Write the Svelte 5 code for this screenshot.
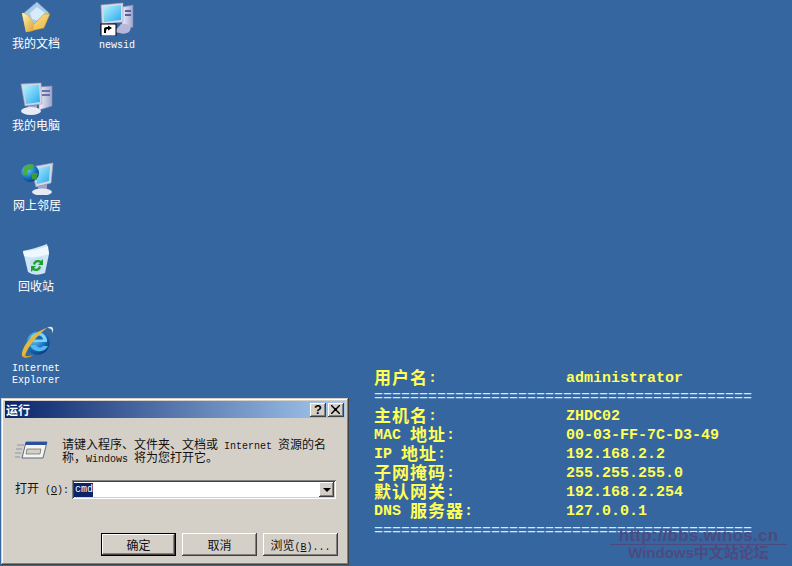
<script>
  const info = [
    { cjk: '主机名', suffix: ':', value: 'ZHDC02' },
    { latin: 'MAC ', cjk: '地址', suffix: ':', value: '00-03-FF-7C-D3-49' },
    { latin: 'IP ', cjk: '地址', suffix: ':', value: '192.168.2.2' },
    { cjk: '子网掩码', suffix: ':', value: '255.255.255.0' },
    { cjk: '默认网关', suffix: ':', value: '192.168.2.254' },
    { latin: 'DNS ', cjk: '服务器', suffix: ':', value: '127.0.0.1' }
  ];
  const rule = '='.repeat(42);
</script>

<div class="desktop">
  <div class="desk-icon docs">
    <svg width="32" height="32" viewBox="0 0 32 32">
      <defs>
        <linearGradient id="fold" x1="0" y1="0" x2="1" y2="1"><stop offset="0" stop-color="#fff6b8"/><stop offset="1" stop-color="#dca12c"/></linearGradient>
        <linearGradient id="foldr" x1="0" y1="0" x2="1" y2="1"><stop offset="0" stop-color="#ffe99a"/><stop offset="1" stop-color="#e8b540"/></linearGradient>
        <linearGradient id="screen" x1="0" y1="0" x2="1" y2="1"><stop offset="0" stop-color="#b8f4fa"/><stop offset="1" stop-color="#29a8f0"/></linearGradient>
        <linearGradient id="case" x1="0" y1="0" x2="1" y2="0"><stop offset="0" stop-color="#eef1fa"/><stop offset="1" stop-color="#9ea4cc"/></linearGradient>
        <radialGradient id="globe" cx=".35" cy=".3" r=".8"><stop offset="0" stop-color="#6fcfff"/><stop offset=".6" stop-color="#1570c0"/><stop offset="1" stop-color="#0a3270"/></radialGradient>
      </defs>
      <path d="M4 12 L17 1 L29 12 L24 24 L10 24 Z" fill="#a9cbe8" stroke="#7fa8cc" stroke-width=".6"/>
      <path d="M10 12 L17 6 L25 12 L20 20 L12 18 Z" fill="#d9ebf8"/>
      <path d="M2 12 C6 12 10 16 14 23 L24 13 L30 13 L24 27 L6 31 Z" fill="url(#foldr)" stroke="#b98a2a" stroke-width=".5"/>
      <path d="M2 12 C6 12 10 16 14 23 L13 30 L6 31 Z" fill="url(#fold)"/>
    </svg>
    <span class="label cjk">我的文档</span>
  </div>

  <div class="desk-icon news">
    <svg width="36" height="34" viewBox="0 0 36 34">
      <path d="M23 5 L34 3 L34 25 L23 28 Z" fill="url(#case)" stroke="#8088b0" stroke-width=".6"/>
      <path d="M26 8 h6 v2 h-6 Z M26 12 h6 v2 h-6 Z" fill="#5a5f9c"/>
      <path d="M22 22 a7 5 0 1 1 -1 9 l-6 -1 Z" fill="#b9b6dc"/>
      <path d="M2 3 L24 1 L24 20 L3 22 Z" fill="#d9dbe8" stroke="#9aa0c0" stroke-width=".6"/>
      <path d="M4 5 L22 3 L22 18 L5 20 Z" fill="url(#screen)"/>
      <rect x="2" y="22" width="15" height="12" fill="#fff" stroke="#000" stroke-width="1"/>
      <path d="M5 31 V27 Q5 25 8 25 H9 V23.5 L13 26 L9 28.5 V27 H8 Q7 27 7 31 Z" fill="#000"/>
    </svg>
    <span class="label latin">newsid</span>
  </div>

  <div class="desk-icon pc">
    <svg width="34" height="33" viewBox="0 0 34 33">
      <path d="M20 5 L33 4 L33 24 L20 28 Z" fill="url(#case)" stroke="#8a90b8" stroke-width=".6"/>
      <path d="M23 8 h8 v2 h-8 Z M23 12 h8 v2 h-8 Z" fill="#6a6fa8"/>
      <path d="M2 2 L22 1 L23 22 L6 24 Z" fill="#cfd6e6" stroke="#9aa4c4" stroke-width=".6"/>
      <path d="M4 4 L20 3 L21 20 L7 22 Z" fill="url(#screen)"/>
      <path d="M9 24 L18 23 L18 27 L9 27 Z" fill="#9da2c6"/>
      <ellipse cx="12" cy="29" rx="10" ry="4" fill="#e9ebf4"/>
    </svg>
    <span class="label cjk">我的电脑</span>
  </div>

  <div class="desk-icon net">
    <svg width="34" height="33" viewBox="0 0 34 33">
      <path d="M11 5 L33 1 L31 21 L16 25 Z" fill="#cfd6e6" stroke="#9aa4c4" stroke-width=".6"/>
      <path d="M14 7 L30 4 L29 19 L17 22 Z" fill="url(#screen)"/>
      <path d="M18 24 L27 22 L27 27 L18 28 Z" fill="#9da2c6"/>
      <ellipse cx="22" cy="30" rx="10" ry="3.5" fill="#e9ebf4"/>
      <circle cx="10" cy="11" r="9" fill="url(#globe)"/>
      <path d="M4 5 Q9 1 14 3 L12 8 L8 8 L7 13 L3 13 Z" fill="#4cae3c"/>
      <path d="M12 11 L18 11 L16 18 L12 17 Z" fill="#3d9c34"/>
    </svg>
    <span class="label cjk">网上邻居</span>
  </div>

  <div class="desk-icon bin">
    <svg width="32" height="33" viewBox="0 0 32 33">
      <path d="M3 8 Q14 6 27 1 L29 11 L25 30 Q15 34 8 29 Z" fill="#cfe6f6"/>
      <path d="M3 8 Q14 8 28 3 L29 11 Q14 16 4 13 Z" fill="#eef8ff"/>
      <path d="M10 17 L22 14 L23 28 L12 30 Z" fill="#bfe0ee"/>
      <path d="M13 21 A5 5 0 0 1 21 18 L23 16 L23 22 L18 22 L20 20 A3 3 0 0 0 15 22 Z" fill="#1fa02e"/>
      <path d="M21 24 A5 5 0 0 1 13 27 L11 29 L11 23 L16 23 L14 25 A3 3 0 0 0 19 23 Z" fill="#1fa02e"/>
    </svg>
    <span class="label cjk">回收站</span>
  </div>

  <div class="desk-icon ie">
    <svg width="34" height="34" viewBox="0 0 34 34">
      <circle cx="17" cy="18" r="11.5" fill="url(#globe)"/>
      <path d="M9 17 H26 A8.5 8.5 0 0 0 9 15 Z" fill="#7fd0f8"/>
      <path d="M13 14.5 H22 A4.5 4 0 0 0 13 14.5 Z" fill="#1468b4"/>
      <path d="M9 20 H15 A4 4 0 0 0 22 21 H27 A10 10 0 0 1 9 20 Z" fill="#56b8ee"/>
      <path d="M1 31 C0 22 12 7 26 3 C22 6 8 18 4 31 Z" fill="#e6b83a"/>
      <path d="M26 3 C31 0 34 3 31 9 C32 5 30 3 26 3 Z" fill="#dfe8f2"/>
      <path d="M1 31 C3 34 8 33 12 30 C8 31 5 32 4 30 Z" fill="#d8a530"/>
    </svg>
    <span class="label latin">Internet<br />Explorer</span>
  </div>

  <div class="bginfo">
    <span><span class="zh">用户名</span>:</span><span>administrator</span>
    <span class="rule">{rule}</span>
    {#each info as row}
      <span>{row.latin ?? ''}<span class="zh">{row.cjk}</span>{row.suffix}</span><span>{row.value}</span>
    {/each}
    <span class="rule last">{rule}</span>
  </div>

  <div class="watermark">
    <span class="wm-url">http://bbs.winos.cn</span>
    <span class="wm-title">Windows中文站论坛</span>
  </div>

  <section class="dialog">
    <header class="titlebar">
      <span class="title">运行</span>
      <div class="caption-btns">
        <button class="caption" aria-label="帮助"><span class="q">?</span></button>
        <button class="caption" aria-label="关闭">
          <svg width="10" height="9" viewBox="0 0 10 9"><path d="M1 0 L4 3 L5 3 L8 0 L9 0 L9 1 L6 4 L6 5 L9 8 L9 9 L8 9 L5 6 L4 6 L1 9 L0 9 L0 8 L3 5 L3 4 L0 1 L0 0 Z" fill="#000"/></svg>
        </button>
      </div>
    </header>

    <div class="intro">
      <svg class="run-icon" width="33" height="18" viewBox="0 0 33 18">
        <path d="M2 4 H9 M1 8 H7 M0 12 H6 M0 16 H5" stroke="#8896a8" stroke-width="1"/>
        <path d="M11 1 L32 1 L28 17 L7 17 Z" fill="#f4f4f0" stroke="#5a6a80" stroke-width="1"/>
        <path d="M11 1 L32 1 L31 4 L10 4 Z" fill="#2a4f9c"/>
        <path d="M12 8 L26 8 L25 13 L11 13 Z" fill="#d4d0c8" stroke="#666" stroke-width=".7"/>
      </svg>
      <p class="prompt">请键入程序、文件夹、文档或<span class="mono">&nbsp;Internet&nbsp;</span>资源的名<br />称，<span class="mono">Windows&nbsp;</span>将为您打开它。</p>
    </div>

    <div class="open-row">
      <label class="open-label" for="cmd">打开<span class="paren">&nbsp;(<u>O</u>):</span></label>
      <div class="combo">
        <span class="value mono" id="cmd">cmd</span>
        <span class="arrow"><i></i></span>
      </div>
    </div>

    <div class="actions">
      <button class="btn default">确定</button>
      <button class="btn">取消</button>
      <button class="btn">浏览<span class="paren">(<u>B</u>)...</span></button>
    </div>
  </section>
</div>

<style>
  :global(body) { margin: 0; background: #36669f; }

  .desktop {
    position: relative;
    width: 792px;
    height: 566px;
    overflow: hidden;
    background: #36669f;
    font-family: "Noto Sans CJK SC", sans-serif;
    font-size: 12px;
    color: #000;
  }

  .desk-icon {
    position: absolute;
    width: 72px;
    display: flex;
    flex-direction: column;
    align-items: center;
    color: #fff;
  }
  .desk-icon svg { display: block; }
  .docs { left: 0; top: 1px; }
  .news { left: 81px; top: 2px; }
  .pc { left: 0; top: 82px; }
  .net { left: 1px; top: 162px; }
  .bin { left: 0; top: 243px; }
  .ie { left: 2px; top: 325px; }
  .ie .label { margin-left: -4px; }

  .label { display: block; text-align: center; }
  .label.cjk { font-size: 12px; line-height: 14px; margin-top: 3px; }
  .label.latin { font-family: "Liberation Mono", monospace; font-size: 10px; line-height: 12px; margin-top: 4px; }

  .bginfo {
    position: absolute;
    left: 374px;
    top: 369px;
    display: grid;
    grid-template-columns: 192px auto;
    grid-auto-rows: 19px;
    font-family: "Liberation Mono", monospace;
    font-weight: 700;
    font-size: 15px;
    line-height: 19px;
    color: #ffff55;
    white-space: pre;
  }
  .zh {
    font-family: "Noto Sans CJK SC", sans-serif;
    font-size: 17px;
    line-height: 0;
    letter-spacing: 1px;
    vertical-align: -2px;
  }
  .rule { grid-column: 1 / -1; color: #d4e6ff; font-weight: 400; }
  .rule.last { margin-top: 1px; }

  .watermark {
    position: absolute;
    left: 610px;
    top: 527px;
    width: 177px;
    display: flex;
    flex-direction: column;
    align-items: center;
    font-family: "Liberation Sans", sans-serif;
    font-weight: 700;
    color: #4c4a80;
  }
  .wm-url {
    font-size: 17px;
    line-height: 17px;
    width: 100%;
    text-align: center;
    border-bottom: 1px solid #4c4a80;
    letter-spacing: .25px;
  }
  .wm-title { font-size: 15px; line-height: 16px; font-family: "Liberation Sans", "Noto Sans CJK SC", sans-serif; }

  .dialog {
    position: absolute;
    left: 1px;
    top: 398px;
    width: 348px;
    height: 167px;
    box-sizing: border-box;
    padding: 3px 4px 4px;
    background: #d4d0c8;
    box-shadow: inset -1px -1px 0 #404040, inset 1px 1px 0 #d4d0c8, inset -2px -2px 0 #808080, inset 2px 2px 0 #fff;
    display: flex;
    flex-direction: column;
  }
  .titlebar {
    height: 17px;
    flex: none;
    display: flex;
    align-items: center;
    justify-content: space-between;
    padding: 0 1px 0 1px;
    background: linear-gradient(90deg, #0a246a, #a6caf0);
  }
  .title { color: #fff; font-weight: 700; font-size: 12px; line-height: 16px; }
  .caption-btns { display: flex; gap: 2px; }
  .caption {
    width: 16px;
    height: 14px;
    padding: 0;
    border: 0;
    display: flex;
    align-items: center;
    justify-content: center;
    background: #d4d0c8;
    box-shadow: inset -1px -1px 0 #404040, inset 1px 1px 0 #fff, inset -2px -2px 0 #808080;
  }
  .q { font: 700 13px/14px "Liberation Sans", sans-serif; color: #000; }
  .caption svg { display: block; }

  .intro { display: flex; margin: 19px 0 0 10px; height: 26px; align-items: center; }
  .run-icon { flex: none; margin-right: 14px; }
  .prompt { margin: 0; font-size: 12px; line-height: 13px; white-space: nowrap; color: #111; }
  .mono { font-family: "Liberation Mono", monospace; font-size: 10px; line-height: 0; }

  .open-row { display: flex; align-items: center; margin: 17px 0 0 10px; height: 19px; }
  .open-label { width: 57px; flex: none; font-size: 12px; line-height: 14px; color: #111; white-space: nowrap; margin-bottom: 4px; }
  .paren { font-family: "Liberation Mono", monospace; font-size: 10px; line-height: 0; }
  .combo {
    width: 264px;
    height: 19px;
    box-sizing: border-box;
    background: #fff;
    display: flex;
    align-items: center;
    justify-content: space-between;
    padding: 2px;
    box-shadow: inset 1px 1px 0 #808080, inset -1px -1px 0 #fff, inset 2px 2px 0 #404040, inset -2px -2px 0 #d4d0c8;
  }
  .value { background: #0a246a; color: #fff; line-height: 14px; padding-left: 1px; width: 19px; box-sizing: border-box; }
  .arrow {
    width: 15px;
    height: 15px;
    display: flex;
    align-items: center;
    justify-content: center;
    background: #d4d0c8;
    box-shadow: inset -1px -1px 0 #404040, inset 1px 1px 0 #fff, inset -2px -2px 0 #808080;
  }
  .arrow i { width: 0; height: 0; border: 4px solid transparent; border-top: 4px solid #000; border-bottom: 0; }

  .actions { display: flex; gap: 6px; margin: 34px 0 0 96px; }
  .btn {
    width: 75px;
    height: 23px;
    padding: 0;
    border: 0;
    background: #d4d0c8;
    color: #111;
    font: 12px/14px "Noto Sans CJK SC", sans-serif;
    box-shadow: inset -1px -1px 0 #404040, inset 1px 1px 0 #fff, inset -2px -2px 0 #808080;
  }
  .btn.default {
    box-shadow: inset 0 0 0 1px #000, inset -2px -2px 0 #404040, inset 2px 2px 0 #fff, inset -3px -3px 0 #808080;
  }
</style>
